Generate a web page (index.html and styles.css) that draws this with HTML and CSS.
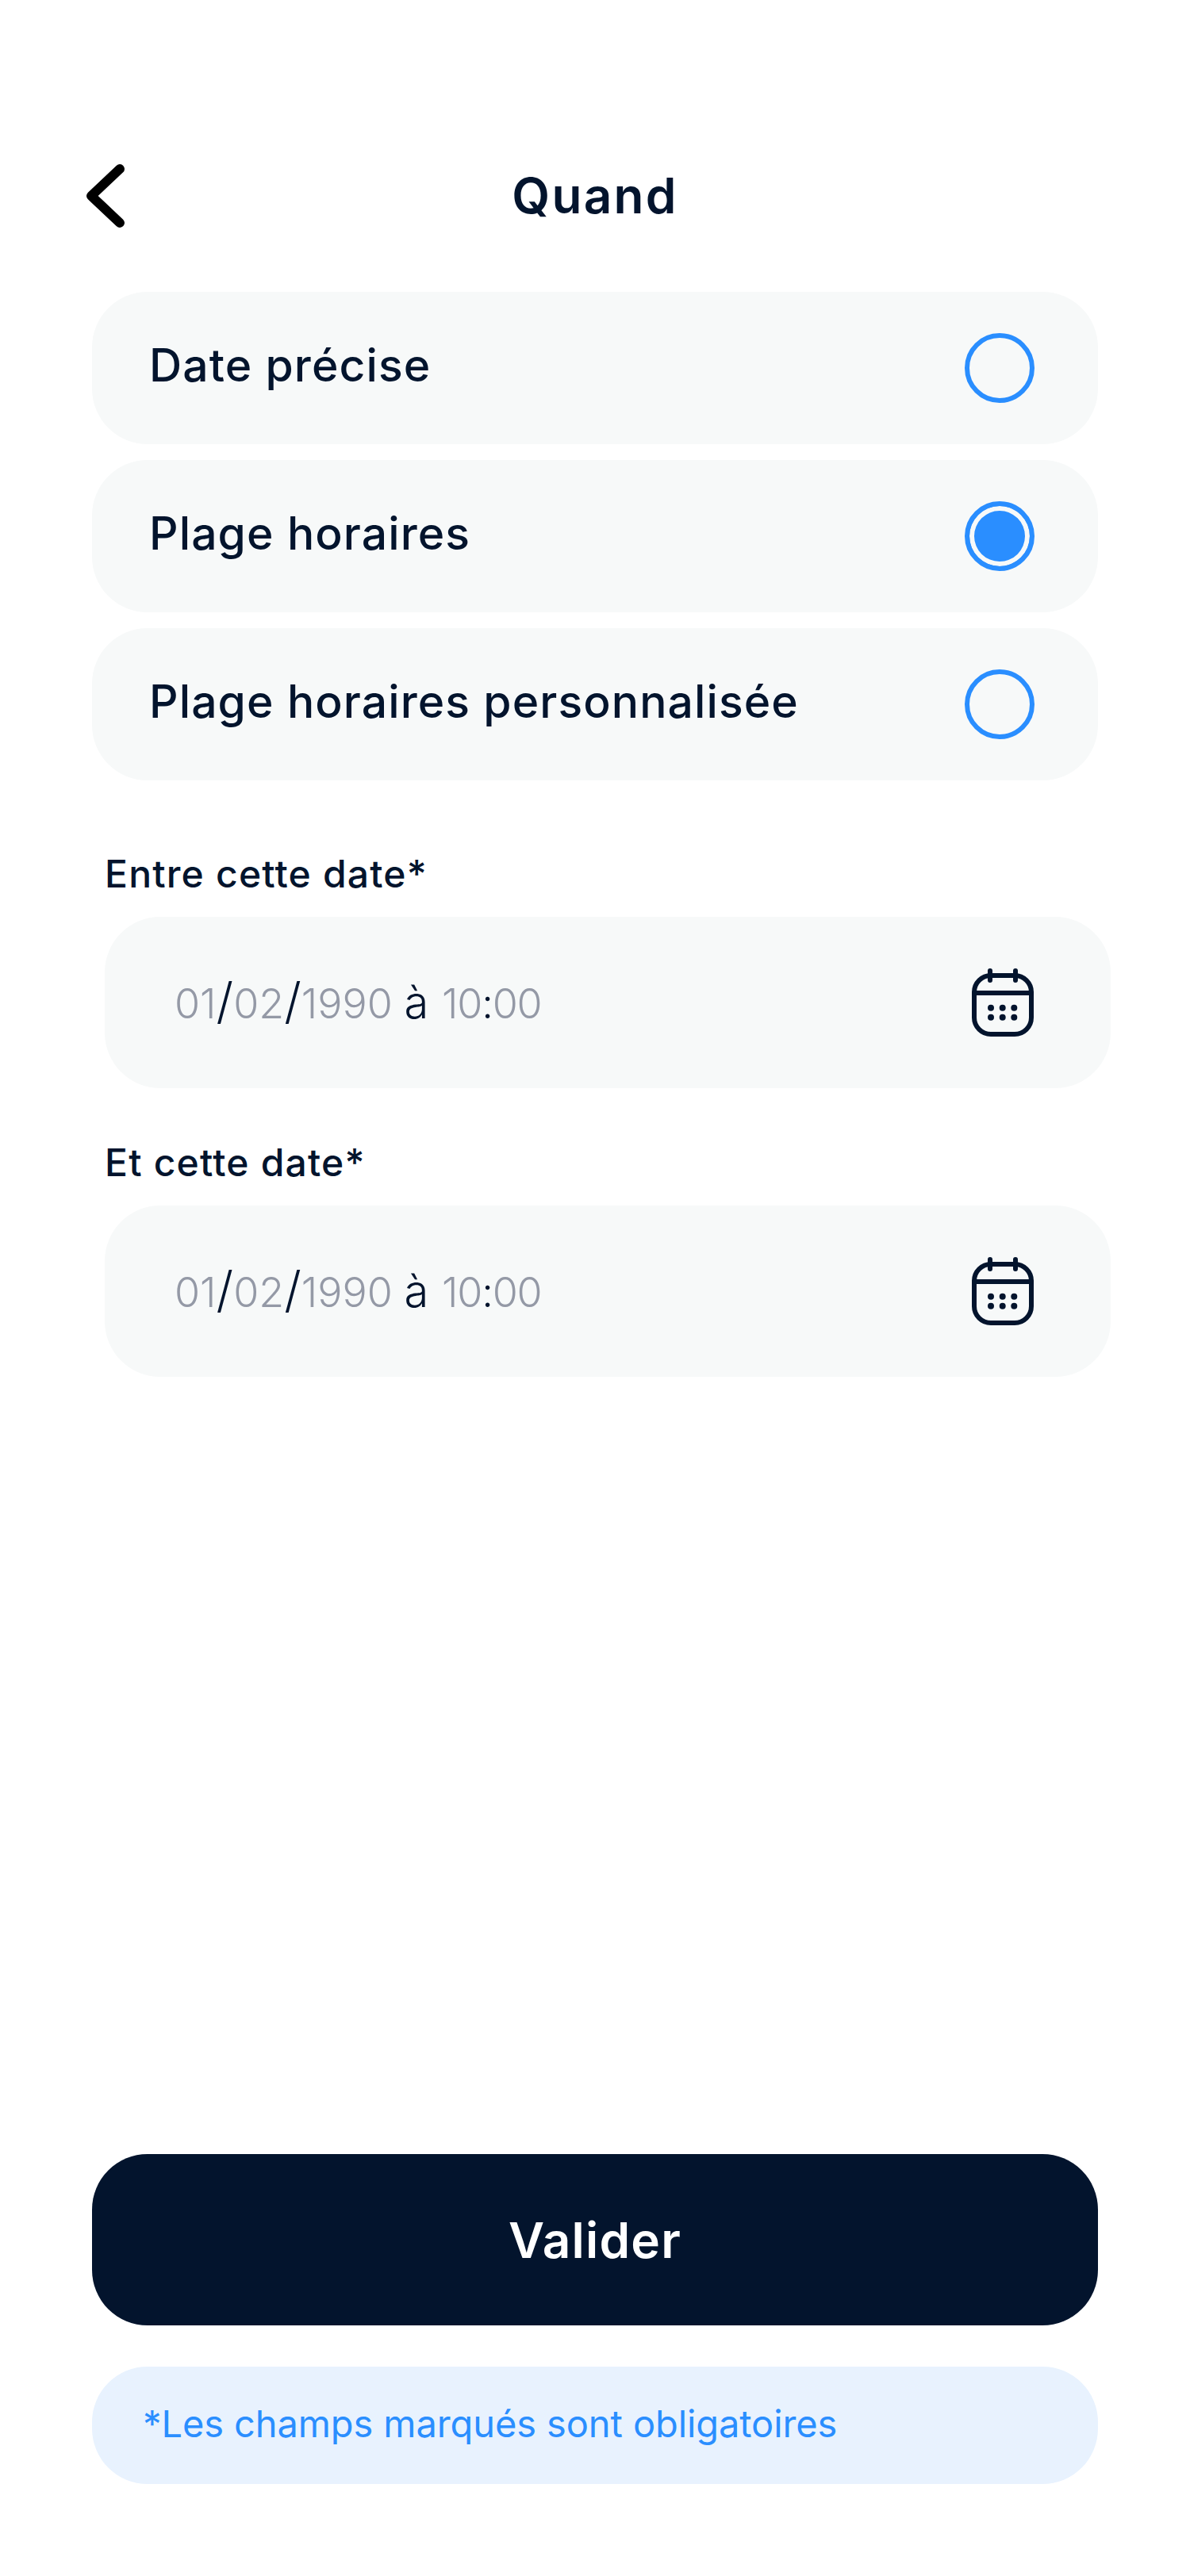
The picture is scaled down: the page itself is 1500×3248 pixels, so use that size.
FILE: index.html

```html
<!DOCTYPE html>
<html lang="fr">
<head>
<meta charset="UTF-8" />
<meta name="viewport" content="width=device-width, initial-scale=1.0" />
<title>Quand</title>
<link rel="stylesheet" href="styles.css">
</head>
<body>
<div class="page">
  <div class="header">
    <a class="back" href="#">
      <svg width="58" height="92" viewBox="0 0 58 92"><path d="M47 11 L11 45 L47 79" fill="none" stroke="#000" stroke-width="12" stroke-linecap="round" stroke-linejoin="round"/></svg>
    </a>
    <h1>Quand</h1>
  </div>

  <div class="options">
    <div class="option"><span class="option-label">Date précise</span><span class="radio"></span></div>
    <div class="option"><span class="option-label">Plage horaires</span><span class="radio checked"></span></div>
    <div class="option"><span class="option-label">Plage horaires personnalisée</span><span class="radio"></span></div>
  </div>

  <div class="fields">
    <div class="field">
      <label>Entre cette date*</label>
      <div class="date-input">
        <div class="date-value"><i>01</i><b>/</b><i>02</i><b>/</b><i>1990</i> <span class="at">à</span> <span class="time"><i>10</i>:<i>00</i></span></div>
        <svg class="cal" width="84" height="92" viewBox="0 0 84 92">
          <rect x="6" y="12" width="72" height="74" rx="21" fill="none" stroke="#03142d" stroke-width="6"/>
          <path d="M6 34 H78 M26 6 V18 M58 6 V18" fill="none" stroke="#03142d" stroke-width="6" stroke-linecap="round"/>
          <g fill="#03142d">
            <circle cx="27" cy="52.7" r="4"/><circle cx="41.7" cy="52.7" r="4"/><circle cx="56.3" cy="52.7" r="4"/>
            <circle cx="27" cy="64.7" r="4"/><circle cx="41.7" cy="64.7" r="4"/><circle cx="56.3" cy="64.7" r="4"/>
          </g>
        </svg>
      </div>
    </div>
    <div class="field">
      <label>Et cette date*</label>
      <div class="date-input">
        <div class="date-value"><i>01</i><b>/</b><i>02</i><b>/</b><i>1990</i> <span class="at">à</span> <span class="time"><i>10</i>:<i>00</i></span></div>
        <svg class="cal" width="84" height="92" viewBox="0 0 84 92">
          <rect x="6" y="12" width="72" height="74" rx="21" fill="none" stroke="#03142d" stroke-width="6"/>
          <path d="M6 34 H78 M26 6 V18 M58 6 V18" fill="none" stroke="#03142d" stroke-width="6" stroke-linecap="round"/>
          <g fill="#03142d">
            <circle cx="27" cy="52.7" r="4"/><circle cx="41.7" cy="52.7" r="4"/><circle cx="56.3" cy="52.7" r="4"/>
            <circle cx="27" cy="64.7" r="4"/><circle cx="41.7" cy="64.7" r="4"/><circle cx="56.3" cy="64.7" r="4"/>
          </g>
        </svg>
      </div>
    </div>
  </div>

  <button class="submit" type="button">Valider</button>
  <div class="note"><span class="note-text">*Les champs marqués sont obligatoires</span></div>
</div>
</body>
</html>
```

FILE: styles.css

```css
* {
  box-sizing: border-box;
}

body {
  margin: 0;
  background: #fff;
  color: #03142d;
  font-family: Inter, "Liberation Sans", sans-serif;
}

.page {
  height: 3248px;
  padding: 202px 116px 0;
  display: flex;
  flex-direction: column;
}

.header {
  height: 92px;
  display: flex;
  align-items: center;
  justify-content: center;
  position: relative;
}

.back {
  position: absolute;
  left: -12px;
  top: 0;
  display: block;
  height: 92px;
}

h1 {
  margin: 0 0 4px;
  font-size: 62px;
  font-weight: 600;
  letter-spacing: 2.3px;
}

.options {
  margin-top: 74px;
  display: flex;
  flex-direction: column;
  gap: 20px;
}

.option {
  height: 192px;
  padding: 0 80px 0 72px;
  background: #f7f9f9;
  border-radius: 70px;
  display: flex;
  align-items: center;
  justify-content: space-between;
}

.option-label {
  margin-bottom: 8px;
  font-size: 57px;
  font-weight: 500;
  letter-spacing: 1.1px;
}

.radio {
  width: 88px;
  height: 88px;
  border: 6px solid #2a8eff;
  border-radius: 50%;
}

.radio.checked {
  background: #2a8eff;
  box-shadow: inset 0 0 0 6px #f7f9f9;
}

.fields {
  margin: 88px -16px 0 16px;
  display: flex;
  flex-direction: column;
  gap: 64px;
}

.field label {
  display: block;
  font-size: 48px;
  font-weight: 500;
  letter-spacing: 1.2px;
  line-height: 60px;
  margin-bottom: 24px;
}

.date-input {
  height: 216px;
  padding: 0 94px 0 88px;
  background: #f7f9f9;
  border-radius: 70px;
  display: flex;
  align-items: center;
  justify-content: space-between;
}

.date-value {
  font-size: 52px;
  font-weight: 300;
}

.date-value i {
  font-style: normal;
  color: #9499a6;
}

.date-value b {
  font-size: 62px;
  font-weight: 300;
  line-height: 1;
}

.date-value .at {
  font-size: 56px;
  margin-right: 2px;
}

.date-value .time {
  letter-spacing: -1.2px;
}

.submit {
  margin-top: auto;
  height: 216px;
  border: none;
  border-radius: 70px;
  background: #03142d;
  color: #fff;
  font-family: inherit;
  font-size: 62px;
  font-weight: 600;
  letter-spacing: 1.2px;
}

.note {
  margin: 52px 0 116px;
  height: 148px;
  padding-left: 64px;
  background: #e8f2fe;
  border-radius: 70px;
  display: flex;
  align-items: center;
  color: #2a8eff;
  font-size: 47px;
  letter-spacing: -0.1px;
}

.note-text {
  margin-bottom: 6px;
}
```
